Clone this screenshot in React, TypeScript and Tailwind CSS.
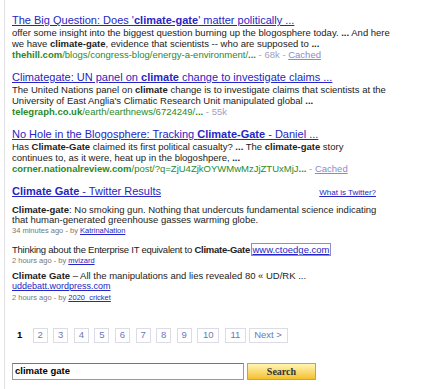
import React from "react";

const B = ({ children }: { children: React.ReactNode }) => <b className="font-bold">{children}</b>;

function Result({
  title, lines, url,
}: { title: React.ReactNode; lines: React.ReactNode[]; url: React.ReactNode }) {
  return (
    <div className="mb-[10px]">
      <div className="h-[14px] leading-[14px] text-[11px] text-[#2626c4] underline whitespace-nowrap">{title}</div>
      {lines.map((l, i) => (
        <div key={i} className="h-[11px] leading-[11px] text-[9.5px] text-[#222] whitespace-nowrap">{l}</div>
      ))}
      <div className="h-[11px] leading-[11px] text-[9.5px] text-[#2a8a2a] whitespace-nowrap">{url}</div>
    </div>
  );
}

const Cached = () => <span className="text-[#8a8ad0] underline">Cached</span>;
const Size = ({ s }: { s: string }) => <span className="text-[#a0a0c0]"> - {s}</span>;

function Meta({ when, who }: { when: string; who: string }) {
  return (
    <div className="h-[11px] leading-[11px] text-[7.5px] text-[#777] whitespace-nowrap">
      {when} - by <span className="text-[#2626c4] underline">{who}</span>
    </div>
  );
}

export default function App() {
  const pages = ["2", "3", "4", "5", "6", "7", "8", "9"];
  const box = "h-[15px] flex items-center justify-center border border-[#dcdce6] text-[#6a78b8]";
  return (
    <div className="w-[424px] h-[389px] bg-white overflow-hidden font-['Liberation_Sans',Arial,sans-serif]">
      <div className="ml-[4px] h-full border-l border-[#e2e2e6] pl-[7px] pt-[13px]">
        <Result
          title={<>The Big Question: Does '<B>climate-gate</B>' matter politically ...</>}
          lines={[
            <>offer some insight into the biggest question burning up the blogosphere today. <B>...</B> And here</>,
            <>we have <B>climate-gate</B>, evidence that scientists -- who are supposed to <B>...</B></>,
          ]}
          url={<><B>thehill.com</B>/blogs/congress-blog/energy-a-environment/<B>...</B><Size s="68k" /><span className="text-[#a0a0c0]"> - </span><Cached /></>}
        />
        <Result
          title={<>Climategate: UN panel on <B>climate</B> change to investigate claims ...</>}
          lines={[
            <>The United Nations panel on <B>climate</B> change is to investigate claims that scientists at the</>,
            <>University of East Anglia's Climatic Research Unit manipulated global <B>...</B></>,
          ]}
          url={<><B>telegraph.co.uk</B>/earth/earthnews/6724249/<B>...</B><Size s="55k" /></>}
        />
        <Result
          title={<>No Hole in the Blogosphere: Tracking <B>Climate-Gate</B> - Daniel ...</>}
          lines={[
            <>Has <B>Climate-Gate</B> claimed its first political casualty? <B>...</B> The <B>climate-gate</B> story</>,
            <>continues to, as it were, heat up in the blogoshpere, <B>...</B></>,
          ]}
          url={<><B>corner.nationalreview.com</B>/post/?q=ZjU4ZjkOYWMwMzJjZTUxMjJ<B>...</B><span className="text-[#a0a0c0]"> - </span><Cached /></>}
        />

        {/* Twitter */}
        <div className="flex items-end justify-between w-[364px] h-[14px] mb-[7px]">
          <div className="leading-[14px] text-[11px] text-[#2626c4] underline whitespace-nowrap">
            <B>Climate Gate</B> - Twitter Results
          </div>
          <div className="leading-[10px] text-[8px] text-[#2626c4] underline">What is Twitter?</div>
        </div>
        <div className="text-[9.5px] text-[#222] leading-[10px]">
          <div className="whitespace-nowrap"><B>Climate-gate</B>: No smoking gun. Nothing that undercuts fundamental science indicating</div>
          <div className="whitespace-nowrap">that human-generated greenhouse gasses warming globe.</div>
          <Meta when="34 minutes ago" who="KatrinaNation" />
          <div className="whitespace-nowrap mt-[9px] tracking-[-0.25px]">
            Thinking about the Enterprise IT equivalent to <B>Climate-Gate</B>{" "}
            <span className="text-[#2626c4] underline outline outline-1 outline-[#8c8cc8] tracking-normal">www.ctoedge.com</span>
          </div>
          <Meta when="2 hours ago" who="mvizard" />
          <div className="whitespace-nowrap mt-[5px]"><B>Climate Gate</B> – All the manipulations and lies revealed 80 « UD/RK ...</div>
          <div className="whitespace-nowrap text-[9px] leading-[11px] text-[#2626c4] underline">uddebatt.wordpress.com</div>
          <Meta when="2 hours ago" who="2020_cricket" />
        </div>

        {/* Pagination */}
        <div className="flex items-center gap-[5.6px] mt-[25px] pl-[5px] text-[9.5px]">
          <span className="font-bold text-black w-[10px]">1</span>
          {pages.map((p) => (
            <span key={p} className={`${box} w-[15px]`}>{p}</span>
          ))}
          <span className={`${box} w-[22px]`}>10</span>
          <span className={`${box} w-[21px]`}>11</span>
          <span className={`${box} w-[39px] -ml-[3px]`}>Next &gt;</span>
        </div>

        {/* Search */}
        <div className="flex items-center gap-[3px] mt-[20px]">
          <div className="h-[17px] w-[232px] border border-[#9a9a9a] border-t-[#777] bg-white pl-[2px] flex items-center text-[9.5px] font-bold text-black">
            climate gate
          </div>
          <div className="h-[17px] w-[69px] border border-[#d9a41a] bg-gradient-to-b from-[#fff6b0] to-[#f4c020] flex items-center justify-center text-[10px] font-bold text-[#333] font-['Liberation_Serif',serif]">
            Search
          </div>
        </div>
      </div>
    </div>
  );
}
